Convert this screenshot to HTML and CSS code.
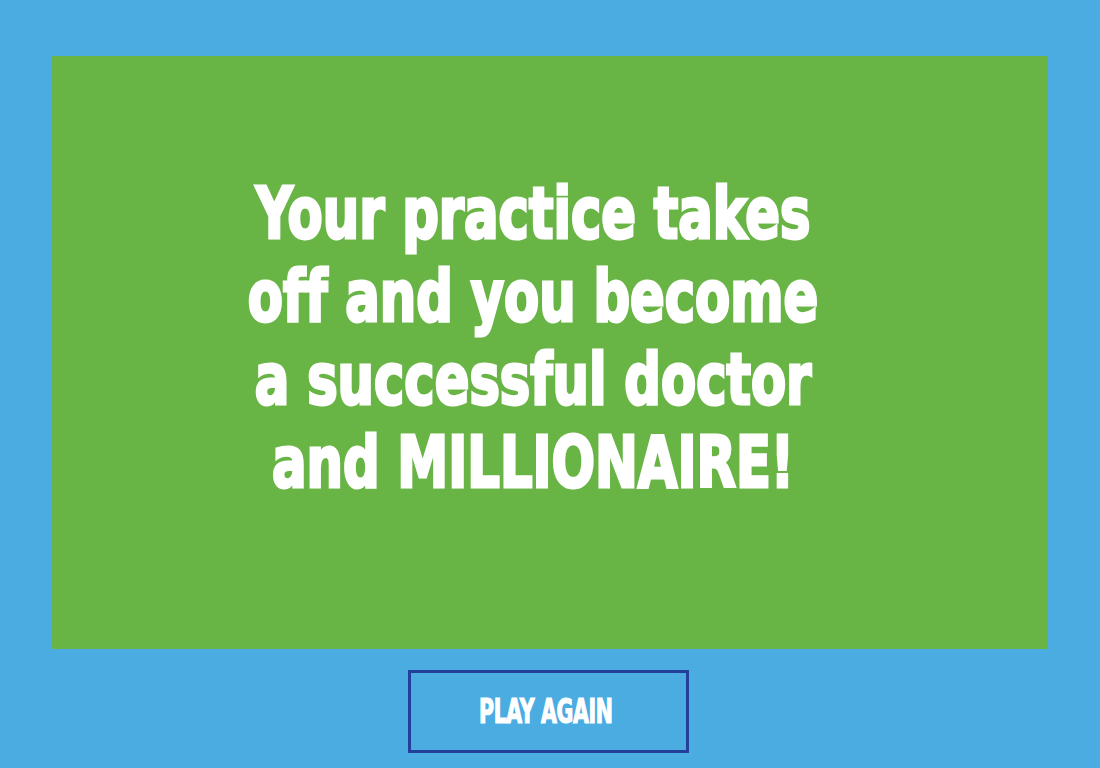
FILE: index.html
```html
<!DOCTYPE html>
<html lang="en">
<head>
<meta charset="utf-8">
<title>Result</title>
<link rel="stylesheet" href="styles.css">
</head>
<body>
<main class="screen">
  <section class="panel">
    <h1 class="message">Your practice takes<br>off and you become<br>a successful doctor<br>and MILLIONAIRE!</h1>
  </section>
  <div class="actions">
    <button class="play-again" type="button"><span class="play-label">PLAY AGAIN</span></button>
  </div>
</main>
</body>
</html>
```
FILE: styles.css
```css
html, body {
  margin: 0;
  padding: 0;
}
body {
  background: #4aace1;
  width: 1100px;
  height: 768px;
  overflow: hidden;
}
.screen {
  display: flex;
  flex-direction: column;
  padding: 56px 52px 0 52px;
}
.panel {
  background: #68b445;
  height: 593px;
  display: flex;
  align-items: center;
  justify-content: center;
  padding-right: 34px;
  padding-bottom: 30px;
  box-sizing: border-box;
}
.message {
  margin: 0;
  color: #ffffff;
  font-family: Impact, "DejaVu Sans Condensed", "DejaVu Sans", sans-serif;
  font-weight: bold;
  font-size: 72px;
  line-height: 83px;
  text-align: center;
  letter-spacing: 0;
  font-variant-ligatures: none;
  -webkit-text-stroke: 3px #ffffff;
  transform: scaleX(0.79);
}
.actions {
  display: flex;
  justify-content: center;
  padding-top: 21px;
  padding-right: 3px;
}
.play-again {
  width: 281px;
  height: 83px;
  box-sizing: border-box;
  background: transparent;
  border: 3px solid #233f99;
  color: #ffffff;
  padding: 0 6px 0 0;
  cursor: pointer;
  display: flex;
  align-items: center;
  justify-content: center;
}
.play-label {
  display: inline-block;
  font-family: Impact, "DejaVu Sans Condensed", "DejaVu Sans", sans-serif;
  font-weight: bold;
  font-size: 33px;
  letter-spacing: -0.5px;
  -webkit-text-stroke: 1.2px #ffffff;
  transform: scaleX(0.69);
  white-space: nowrap;
}
```
